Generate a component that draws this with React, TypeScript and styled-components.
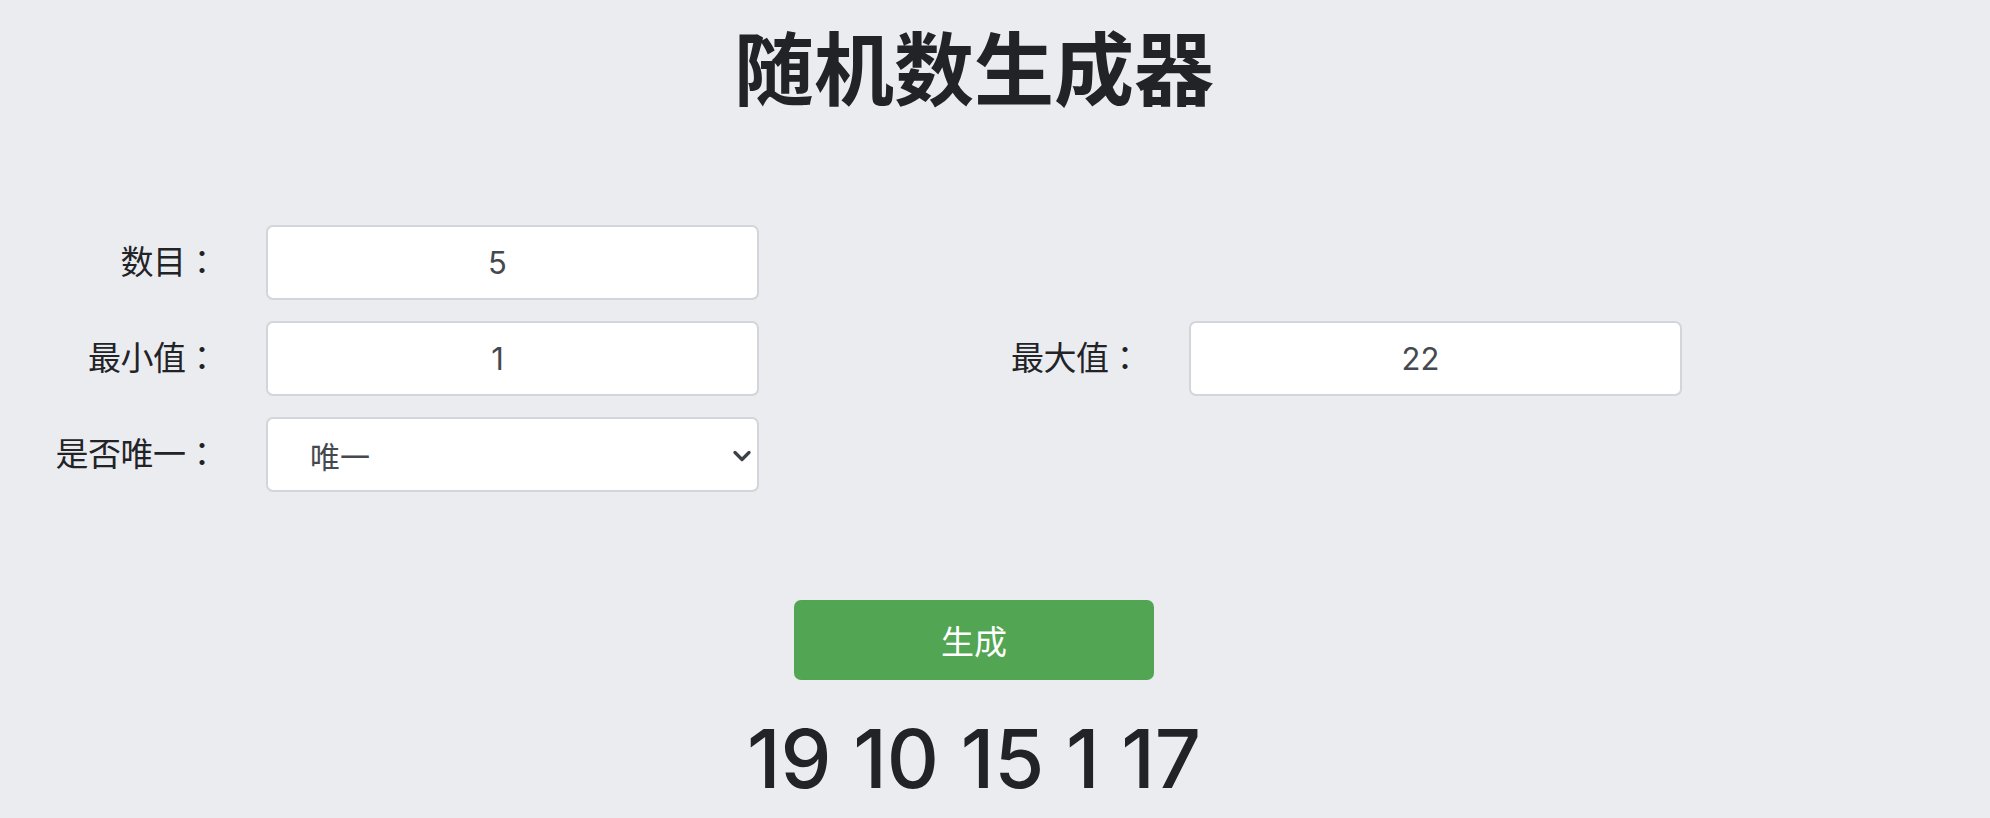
import React, { useState } from "react";
import styled, { createGlobalStyle } from "styled-components";

const GlobalStyle = createGlobalStyle`
  html, body { margin: 0; padding: 0; background: #ebecf0; }
  body { font-family: Inter, "Noto Sans CJK SC", sans-serif; color: #222327; }
  * { box-sizing: border-box; }
`;

const Page = styled.div`
  width: 1948px;
  display: flex;
  flex-direction: column;
  align-items: center;
`;

const Title = styled.h1`
  margin: 16px 0 0;
  font-family: "Noto Sans CJK SC", sans-serif;
  font-size: 80px;
  line-height: 96px;
  font-weight: 700;
  color: #222327;
`;

const Form = styled.div`
  align-self: flex-start;
  margin-top: 113px;
  display: grid;
  grid-template-columns: 224px 493px 346px 493px;
  column-gap: 42px;
  row-gap: 21px;
  grid-auto-rows: 75px;
`;

const Label = styled.label`
  display: flex;
  align-items: center;
  justify-content: flex-end;
  font-family: "Noto Sans CJK SC", sans-serif;
  font-size: 33px;
  letter-spacing: -0.5px;
  color: #222327;
  padding-bottom: 6px;
  padding-right: 6px;
`;

const Colon = styled.span`
  font-family: "Noto Sans CJK TC", sans-serif;
`;

const Field = styled.input`
  width: 100%;
  height: 100%;
  border: 2px solid #d2d5da;
  border-radius: 7px;
  background: #fff;
  font-family: Inter, "Noto Sans CJK SC", sans-serif;
  font-size: 31px;
  color: #45494f;
  text-align: center;
  padding: 0 30px 0 0;
  outline: none;
`;

const SelectWrap = styled.div`
  position: relative;
  width: 100%;
  height: 100%;
`;

const Select = styled.select`
  appearance: none;
  width: 100%;
  height: 100%;
  border: 2px solid #d2d5da;
  border-radius: 7px;
  background: #fff;
  font-family: "Noto Sans CJK SC", sans-serif;
  font-size: 30px;
  color: #45494f;
  padding: 0 50px 0 42px;
  outline: none;
`;

const Chevron = styled.svg`
  position: absolute;
  right: 8px;
  top: 50%;
  width: 18px;
  height: 12px;
  margin-top: -5px;
  pointer-events: none;
`;

const Button = styled.button`
  margin-top: 108px;
  width: 360px;
  height: 80px;
  border: none;
  border-radius: 7px;
  background: #52a552;
  color: #fff;
  font-family: "Noto Sans CJK SC", sans-serif;
  font-size: 33px;
  cursor: pointer;
`;

const Result = styled.div`
  margin-top: 29px;
  font-family: Inter, sans-serif;
  font-size: 81px;
  font-weight: 500;
  line-height: 100px;
  color: #222327;
`;

export default function App() {
  const [count, setCount] = useState("5");
  const [min, setMin] = useState("1");
  const [max, setMax] = useState("22");
  const [unique, setUnique] = useState("1");
  const [result, setResult] = useState([19, 10, 15, 1, 17]);

  const generate = () => {
    const n = parseInt(count, 10) || 0;
    const lo = parseInt(min, 10) || 0;
    const hi = parseInt(max, 10) || 0;
    const out: number[] = [];
    let guard = 0;
    while (out.length < n && guard < 10000) {
      guard++;
      const v = lo + Math.floor(Math.random() * (hi - lo + 1));
      if (unique === "1" && out.includes(v)) continue;
      out.push(v);
    }
    setResult(out);
  };

  return (
    <>
      <GlobalStyle />
      <Page>
        <Title>随机数生成器</Title>
        <Form>
          <Label>数目<Colon>：</Colon></Label>
          <Field value={count} onChange={(e) => setCount(e.target.value)} />
          <div />
          <div />
          <Label>最小值<Colon>：</Colon></Label>
          <Field value={min} onChange={(e) => setMin(e.target.value)} />
          <Label>最大值<Colon>：</Colon></Label>
          <Field value={max} onChange={(e) => setMax(e.target.value)} />
          <Label>是否唯一<Colon>：</Colon></Label>
          <SelectWrap>
            <Select value={unique} onChange={(e) => setUnique(e.target.value)}>
              <option value="1">唯一</option>
              <option value="0">不唯一</option>
            </Select>
            <Chevron viewBox="0 0 18 12">
              <path d="M2 2.5 L9 9.5 L16 2.5" fill="none" stroke="#3d4046" strokeWidth="3.2" strokeLinecap="round" strokeLinejoin="round" />
            </Chevron>
          </SelectWrap>
        </Form>
        <Button onClick={generate}>生成</Button>
        <Result>{result.join(" ")}</Result>
      </Page>
    </>
  );
}
